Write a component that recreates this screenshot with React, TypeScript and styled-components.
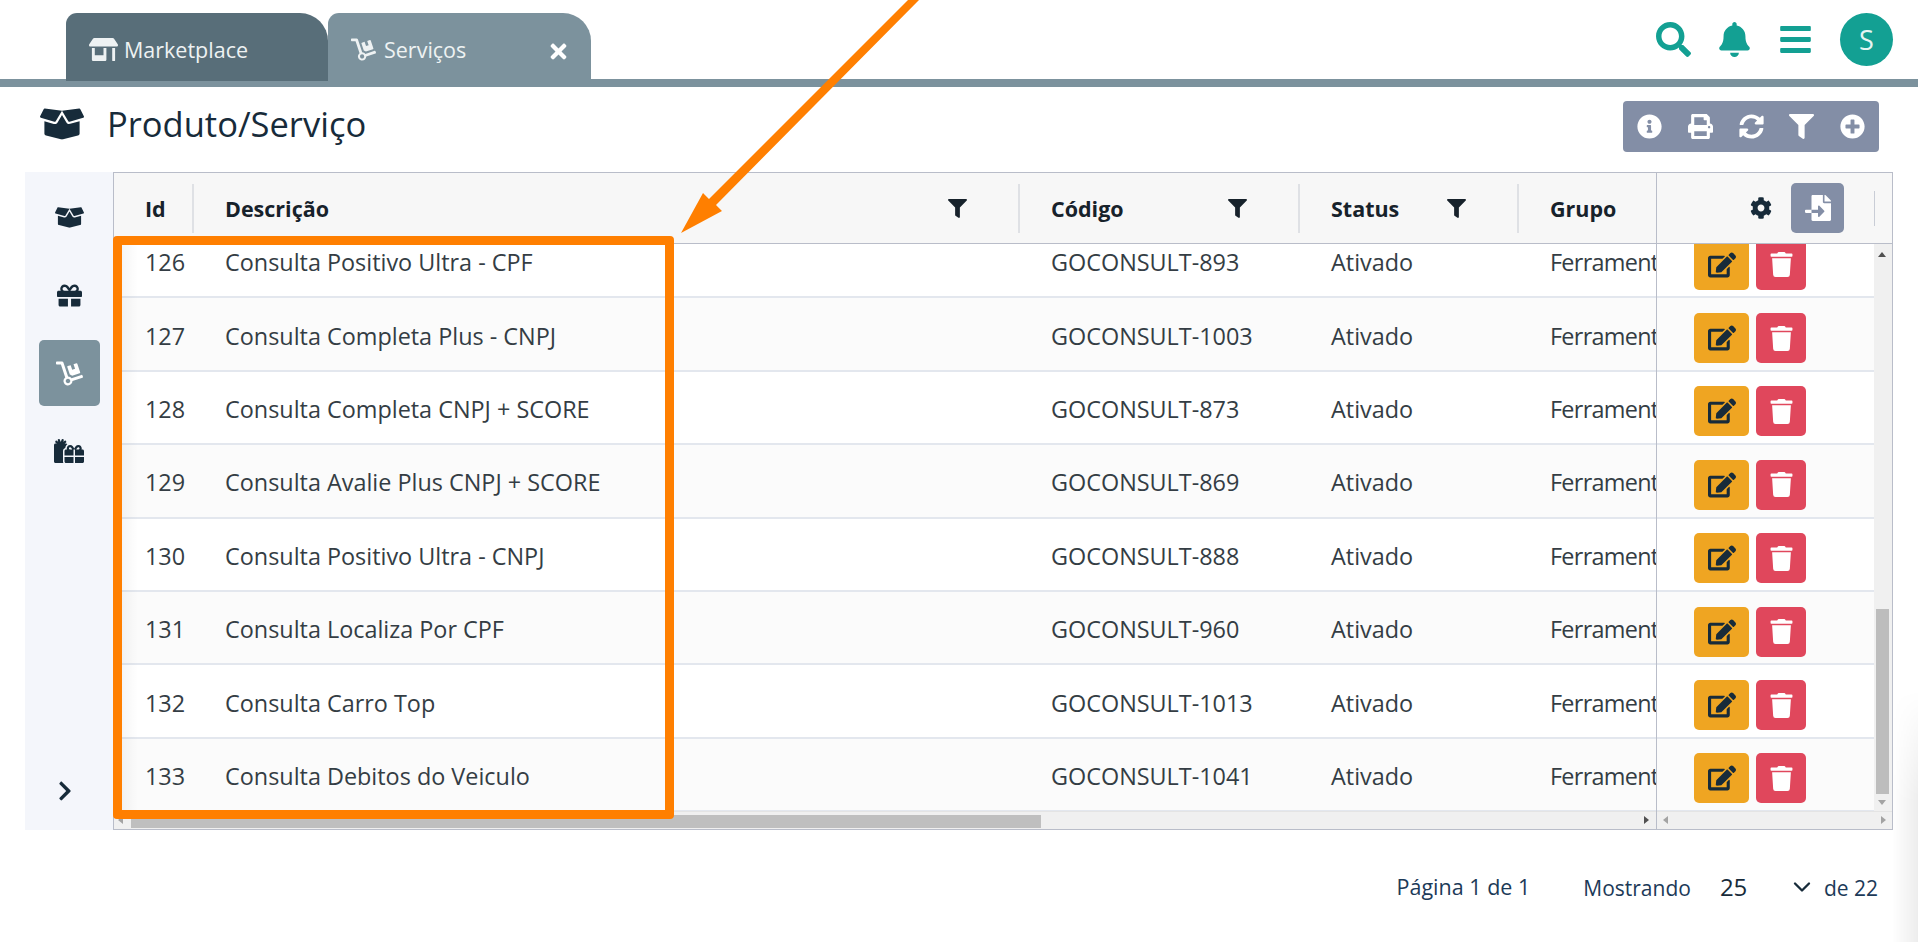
import React from 'react';
import styled, { createGlobalStyle } from 'styled-components';
import { ChevronDown } from 'lucide-react';
import {
   FaBars,
   FaBell,
   FaBoxOpen,
   FaChevronRight,
   FaCog,
   FaDolly,
   FaEdit,
   FaFileImport,
   FaFilter,
   FaGift,
   FaGifts,
   FaInfoCircle,
   FaPlusCircle,
   FaPrint,
   FaSearch,
   FaStoreAlt,
   FaSyncAlt,
   FaTimes,
   FaTrash,
} from 'react-icons/fa';

const navy = '#172b3a';
const slate = '#7c929d';
const teal = '#13a093';
const grid = '#b9bdc9';
const columns = '80px 826px 280px 219px 300px';

const GlobalStyle = createGlobalStyle`
   html, body {
      margin: 0;
      padding: 0;
      background: #fff;
      overflow: hidden;
   }
   * {
      box-sizing: border-box;
   }
   body {
      font-family: 'Open Sans', 'Noto Sans', sans-serif;
      color: ${navy};
   }
`;

const Page = styled.div`
   position: relative;
   width: 1918px;
   height: 942px;
   overflow: hidden;
   &::after {
      content: '';
      position: absolute;
      top: 690px;
      right: 0;
      bottom: 0;
      width: 26px;
      background: linear-gradient(90deg, rgba(0, 0, 0, 0), rgba(0, 0, 0, 0.07));
      -webkit-mask-image: linear-gradient(180deg, transparent, #000 45%);
      mask-image: linear-gradient(180deg, transparent, #000 45%);
      pointer-events: none;
   }
`;

const TopBar = styled.header`
   display: flex;
   justify-content: space-between;
   height: 87px;
   padding: 13px 25px 0 66px;
   border-bottom: 8px solid ${slate};
`;

const Tabs = styled.nav`
   display: flex;
   height: 68px;
`;

const Tab = styled.div<{ $active?: boolean }>`
   display: flex;
   align-items: center;
   width: ${props => (props.$active ? '263px' : '262px')};
   height: ${props => (props.$active ? '66px' : '68px')};
   padding: ${props => (props.$active ? '6px' : '4px')} 0 0 23px;
   border-radius: 11px 28px 0 0;
   background: ${props => (props.$active ? slate : '#586e79')};
   color: #eef2f3;
   font-size: 21.5px;
   position: relative;
   z-index: 1;
   svg {
      flex: none;
   }
`;

const TabLabel = styled.span<{ $gap: number }>`
   margin-left: ${props => props.$gap}px;
`;

const TabClose = styled.span`
   display: flex;
   margin-left: auto;
   margin-right: 21px;
   margin-top: 4px;
   color: #fff;
`;

const HeaderActions = styled.div`
   display: flex;
   align-items: flex-start;
   color: ${teal};
`;

const HeaderIcon = styled.span<{ $width: number; $gap: number }>`
   display: flex;
   justify-content: center;
   width: ${props => props.$width}px;
   margin-top: 9px;
   margin-left: ${props => props.$gap}px;
`;

const Avatar = styled.div`
   display: flex;
   align-items: center;
   justify-content: center;
   width: 53px;
   height: 53px;
   margin-left: 29px;
   border-radius: 50%;
   background: ${teal};
   color: #e6f5f3;
   font-size: 27px;
`;

const TitleRow = styled.div`
   display: flex;
   align-items: center;
   justify-content: space-between;
   height: 51px;
   margin-top: 14px;
   padding: 0 39px 0 40px;
`;

const Title = styled.h1`
   display: flex;
   align-items: center;
   margin: -6px 0 0;
   font-size: 34.5px;
   font-weight: 400;
   color: ${navy};
`;

const TitleIcon = styled.span`
   display: flex;
   width: 67px;
   margin-top: 1px;
`;

const Toolbar = styled.div`
   display: flex;
   align-items: center;
   justify-content: space-between;
   width: 256px;
   height: 51px;
   padding: 0 14px;
   border-radius: 4px;
   background: #838ea6;
   color: #fff;
`;

const Content = styled.main`
   display: flex;
   height: 658px;
   margin: 20px 25px 0;
`;

const Sidebar = styled.aside`
   display: flex;
   flex: none;
   flex-direction: column;
   align-items: center;
   gap: 12px;
   width: 88px;
   padding: 12px 0 0 0;
   background: #f4f6fb;
`;

const SideItem = styled.div<{ $active?: boolean }>`
   display: flex;
   align-items: center;
   justify-content: center;
   width: 61px;
   height: 66px;
   border-radius: 5px;
   background: ${props => (props.$active ? slate : 'transparent')};
   color: ${props => (props.$active ? '#fff' : navy)};
`;

const SideExpand = styled.div`
   display: flex;
   margin-top: auto;
   margin-bottom: 28px;
   margin-right: 9px;
   color: ${navy};
`;

const Table = styled.section`
   display: flex;
   flex: 1;
   min-width: 0;
   border: 1px solid ${grid};
`;

const Pane = styled.div`
   display: flex;
   flex-direction: column;
   min-width: 0;
`;

const MainPane = styled(Pane)`
   width: 1542px;
   flex: none;
`;

const ActionPane = styled(Pane)`
   flex: 1;
   border-left: 1px solid ${grid};
`;

const HeaderRow = styled.div`
   display: grid;
   grid-template-columns: ${columns};
   align-items: center;
   flex: none;
   height: 71px;
   border-bottom: 1px solid ${grid};
   background: #f7f7f7;
   overflow: hidden;
`;

const HeaderCell = styled.div`
   display: flex;
   align-items: center;
   justify-content: space-between;
   min-width: 0;
   height: 49px;
   padding: 0 51px 0 31px;
   border-right: 2px solid #dfe1e5;
   font-size: 21.5px;
   font-weight: 700;
   color: #17222b;
   white-space: nowrap;
   &:first-child {
      padding-right: 0;
   }
   &:last-child {
      border-right: none;
   }
`;

const ActionHeader = styled.div`
   display: flex;
   align-items: center;
   flex: none;
   height: 71px;
   padding-left: 93px;
   border-bottom: 1px solid ${grid};
   background: #f7f7f7;
   color: ${navy};
`;

const ImportButton = styled.div`
   display: flex;
   align-items: center;
   justify-content: center;
   width: 53px;
   height: 50px;
   margin-left: 19px;
   border-radius: 5px;
   background: #838ea6;
   color: #fff;
`;

const HeaderDivider = styled.span`
   width: 1px;
   height: 35px;
   margin-left: 30px;
   background: #c9cdd6;
`;

const Body = styled.div`
   flex: 1;
   min-height: 0;
   overflow: hidden;
   position: relative;
   &::after {
      content: '';
      position: absolute;
      top: 0;
      bottom: 0;
      left: 0;
      width: 24px;
      background: linear-gradient(90deg, rgba(0, 0, 0, 0.06), rgba(0, 0, 0, 0));
   }
`;

const ActionBody = styled.div`
   display: flex;
   flex: 1;
   min-height: 0;
`;

const ActionRows = styled.div`
   flex: 1;
   min-width: 0;
   overflow: hidden;
`;

const Rows = styled.div`
   margin-top: -19px;
`;

const Row = styled.div<{ $striped: boolean }>`
   display: grid;
   grid-template-columns: ${columns};
   align-items: center;
   height: 73.4px;
   border-bottom: 2px solid #e3e7ee;
   background: ${props => (props.$striped ? '#fbfbfb' : '#fff')};
`;

const Cell = styled.div`
   padding: 3px 0 0 31px;
   font-size: 23.4px;
   color: #343d44;
   white-space: nowrap;
   overflow: hidden;
`;

const GroupCell = styled(Cell)`
   letter-spacing: -0.7px;
`;

const ActionRow = styled.div<{ $striped: boolean }>`
   display: flex;
   align-items: center;
   gap: 7px;
   height: 73.4px;
   padding: 8px 0 0 37px;
   border-bottom: 2px solid #e3e7ee;
   background: ${props => (props.$striped ? '#fbfbfb' : '#fff')};
`;

const RowButton = styled.div<{ $kind: 'edit' | 'remove' }>`
   display: flex;
   align-items: center;
   justify-content: center;
   width: ${props => (props.$kind === 'edit' ? '55px' : '50px')};
   height: 50px;
   border-radius: 5px;
   background: ${props => (props.$kind === 'edit' ? '#efa522' : '#e0475c')};
   color: ${props => (props.$kind === 'edit' ? navy : '#fff')};
`;

const VScroll = styled.div`
   position: relative;
   flex: none;
   width: 18px;
   background: #f0f0f0;
`;

const VThumb = styled.div`
   position: absolute;
   top: 365px;
   bottom: 17px;
   left: 2px;
   right: 3px;
   background: #bdbdbd;
`;

const HScroll = styled.div`
   position: relative;
   flex: none;
   height: 18px;
   border-top: 1px solid #e4e4e4;
   background: #f0f0f0;
`;

const HThumb = styled.div`
   position: absolute;
   top: 3px;
   bottom: 1px;
   left: 17px;
   width: 910px;
   background: #bfbfbf;
`;

const Arrow = styled.span<{ $dir: 'up' | 'down' | 'left' | 'right'; $at: string; $shade?: string }>`
   position: absolute;
   ${props => props.$at};
   width: 0;
   height: 0;
   border: 4px solid transparent;
   ${props => {
      const shade = props.$shade ?? '#a3a3a3';
      if (props.$dir === 'up') return `border-top-width: 0; border-bottom: 5px solid ${shade};`;
      if (props.$dir === 'down') return `border-bottom-width: 0; border-top: 5px solid ${shade};`;
      if (props.$dir === 'left') return `border-left-width: 0; border-right: 5px solid ${shade};`;
      return `border-right-width: 0; border-left: 5px solid ${shade};`;
   }}
`;

const Footer = styled.footer`
   display: flex;
   align-items: center;
   justify-content: flex-end;
   height: 116px;
   padding: 0 40px 0 0;
   font-size: 21px;
   color: #1c3a58;
`;

const PageInfo = styled.span`
   margin-right: 53px;
   margin-top: -3px;
   font-size: 21.5px;
`;

const PageSize = styled.span`
   display: flex;
   align-items: center;
   width: 104px;
   margin-top: -3px;
   margin-left: 29px;
   font-size: 24px;
   color: ${navy};
`;

const SizeChevron = styled.span`
   display: flex;
   margin-left: auto;
   margin-right: 8px;
   color: ${navy};
`;

const Highlight = styled.div`
   position: absolute;
   left: 113px;
   top: 236px;
   width: 561px;
   height: 583px;
   border: 9px solid #ff7f00;
   border-radius: 4px;
   pointer-events: none;
`;

const Pointer = styled.svg`
   position: absolute;
   left: 670px;
   top: 0;
   pointer-events: none;
`;

const rows = [
   { id: 126, name: 'Consulta Positivo Ultra - CPF', code: 'GOCONSULT-893' },
   { id: 127, name: 'Consulta Completa Plus - CNPJ', code: 'GOCONSULT-1003' },
   { id: 128, name: 'Consulta Completa CNPJ + SCORE', code: 'GOCONSULT-873' },
   { id: 129, name: 'Consulta Avalie Plus CNPJ + SCORE', code: 'GOCONSULT-869' },
   { id: 130, name: 'Consulta Positivo Ultra - CNPJ', code: 'GOCONSULT-888' },
   { id: 131, name: 'Consulta Localiza Por CPF', code: 'GOCONSULT-960' },
   { id: 132, name: 'Consulta Carro Top', code: 'GOCONSULT-1013' },
   { id: 133, name: 'Consulta Debitos do Veiculo', code: 'GOCONSULT-1041' },
];

function App() {
   return (
      <Page>
         <GlobalStyle />
         <TopBar>
            <Tabs>
               <Tab>
                  <FaStoreAlt size={29} />
                  <TabLabel $gap={6}>Marketplace</TabLabel>
               </Tab>
               <Tab $active>
                  <FaDolly size={25} />
                  <TabLabel $gap={8}>Serviços</TabLabel>
                  <TabClose>
                     <FaTimes size={23} />
                  </TabClose>
               </Tab>
            </Tabs>
            <HeaderActions>
               <HeaderIcon $width={35} $gap={0}>
                  <FaSearch size={35} />
               </HeaderIcon>
               <HeaderIcon $width={31} $gap={28}>
                  <FaBell size={35} />
               </HeaderIcon>
               <HeaderIcon $width={31} $gap={30}>
                  <FaBars size={35} />
               </HeaderIcon>
               <Avatar>S</Avatar>
            </HeaderActions>
         </TopBar>

         <TitleRow>
            <Title>
               <TitleIcon>
                  <FaBoxOpen size={44} />
               </TitleIcon>
               Produto/Serviço
            </Title>
            <Toolbar>
               <FaInfoCircle size={25} />
               <FaPrint size={25} />
               <FaSyncAlt size={25} />
               <FaFilter size={25} />
               <FaPlusCircle size={25} />
            </Toolbar>
         </TitleRow>

         <Content>
            <Sidebar>
               <SideItem>
                  <FaBoxOpen size={29} />
               </SideItem>
               <SideItem>
                  <FaGift size={25} />
               </SideItem>
               <SideItem $active>
                  <FaDolly size={27} />
               </SideItem>
               <SideItem>
                  <FaGifts size={30} />
               </SideItem>
               <SideExpand>
                  <FaChevronRight size={22} />
               </SideExpand>
            </Sidebar>
            <Table>
               <MainPane>
                  <HeaderRow>
                     <HeaderCell>Id</HeaderCell>
                     <HeaderCell>
                        Descrição
                        <FaFilter size={19} />
                     </HeaderCell>
                     <HeaderCell>
                        Código
                        <FaFilter size={19} />
                     </HeaderCell>
                     <HeaderCell>
                        Status
                        <FaFilter size={19} />
                     </HeaderCell>
                     <HeaderCell>Grupo</HeaderCell>
                  </HeaderRow>
                  <Body>
                     <Rows>
                        {rows.map((row, index) => (
                           <Row key={row.id} $striped={index % 2 === 1}>
                              <Cell>{row.id}</Cell>
                              <Cell>{row.name}</Cell>
                              <Cell>{row.code}</Cell>
                              <Cell>Ativado</Cell>
                              <GroupCell>Ferramentas</GroupCell>
                           </Row>
                        ))}
                     </Rows>
                  </Body>
                  <HScroll>
                     <Arrow $dir="left" $at="top: 4px; left: 4px;" />
                     <HThumb />
                     <Arrow $dir="right" $at="top: 4px; right: 7px;" $shade="#505050" />
                  </HScroll>
               </MainPane>
               <ActionPane>
                  <ActionHeader>
                     <FaCog size={22} />
                     <ImportButton>
                        <FaFileImport size={26} />
                     </ImportButton>
                     <HeaderDivider />
                  </ActionHeader>
                  <ActionBody>
                     <ActionRows>
                        <Rows>
                           {rows.map((row, index) => (
                              <ActionRow key={row.id} $striped={index % 2 === 1}>
                                 <RowButton $kind="edit">
                                    <FaEdit size={28} />
                                 </RowButton>
                                 <RowButton $kind="remove">
                                    <FaTrash size={25} />
                                 </RowButton>
                              </ActionRow>
                           ))}
                        </Rows>
                     </ActionRows>
                     <VScroll>
                        <Arrow $dir="up" $at="top: 8px; left: 4px;" $shade="#505050" />
                        <VThumb />
                        <Arrow $dir="down" $at="bottom: 6px; left: 4px;" />
                     </VScroll>
                  </ActionBody>
                  <HScroll>
                     <Arrow $dir="left" $at="top: 4px; left: 6px;" />
                     <Arrow $dir="right" $at="top: 4px; right: 6px;" />
                  </HScroll>
               </ActionPane>
            </Table>
         </Content>

         <Footer>
            <PageInfo>Página 1 de 1</PageInfo>
            <span>Mostrando</span>
            <PageSize>
               25
               <SizeChevron>
                  <ChevronDown size={28} strokeWidth={2} />
               </SizeChevron>
            </PageSize>
            <span>de 22</span>
         </Footer>

         <Highlight />
         <Pointer width="260" height="240" viewBox="670 0 260 240">
            <polygon fill="#ff7f00" points="908,0 919,0 716,205 722,211 681,233 703,193 709,199" />
         </Pointer>
      </Page>
   );
}

export default App;
